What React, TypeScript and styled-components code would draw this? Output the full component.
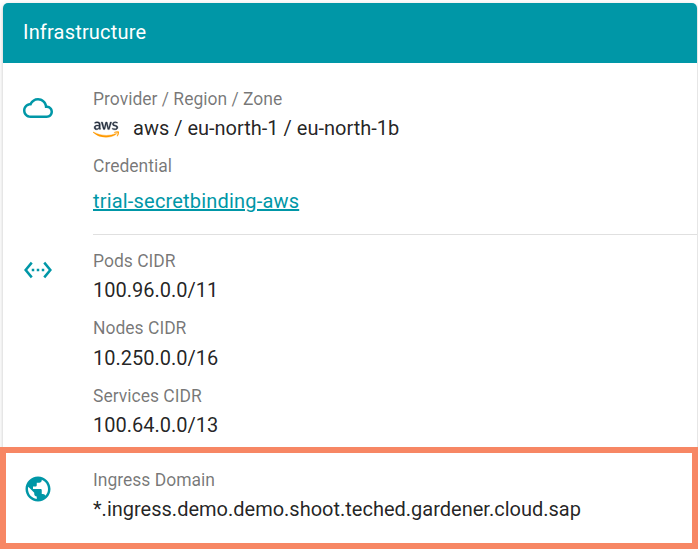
import React from "react";
import styled, { createGlobalStyle } from "styled-components";
import { FaAws } from "react-icons/fa";

const GlobalStyle = createGlobalStyle`
  * { box-sizing: border-box; }
  body {
    margin: 0;
    background: #fff;
    font-family: Roboto, "Liberation Sans", sans-serif;
    overflow: hidden;
  }
`;

const Page = styled.main`
  position: relative;
  width: 698px;
  height: 549px;
  overflow: hidden;
  padding: 3px 1px 0 3px;
`;

const Card = styled.section`
  height: 560px;
  border-radius: 5px;
  background: #fff;
  box-shadow: 0 3px 1px -2px rgba(0, 0, 0, 0.2), 0 2px 3px rgba(0, 0, 0, 0.14), 0 1px 6px rgba(0, 0, 0, 0.12);
`;

const Header = styled.header`
  display: flex;
  align-items: center;
  height: 60px;
  padding: 0 20px 2px;
  border-radius: 5px 5px 0 0;
  background: #0097a7;
  color: #fff;
  font-size: 20px;
  letter-spacing: 0.009375em;
`;

const Row = styled.div<{ $top: number; $height: number }>`
  display: flex;
  height: ${(p) => p.$height}px;
  padding: ${(p) => p.$top}px 0 0 20px;
`;

const IconCell = styled.div<{ $offset: number }>`
  flex: 0 0 70px;
  padding-top: ${(p) => p.$offset}px;
`;

const Icon = styled.svg`
  display: block;
  width: 30px;
  height: 30px;
  fill: #0097a7;
`;

const Fields = styled.div`
  flex: 1;
`;

const Field = styled.div<{ $height?: number }>`
  height: ${(p) => p.$height ?? 67.4}px;
`;

const Label = styled.div`
  font-size: 17.5px;
  line-height: 22px;
  color: rgba(0, 0, 0, 0.54);
`;

const Value = styled.div<{ $gap?: number }>`
  display: flex;
  align-items: center;
  margin-top: ${(p) => p.$gap ?? 6.2}px;
  font-size: 20px;
  line-height: 24px;
  color: rgba(0, 0, 0, 0.87);
`;

const Link = styled.a`
  color: #0097a7;
  letter-spacing: 0.009375em;
  text-decoration: underline;
  text-decoration-thickness: 2px;
`;

const VendorLogo = styled(FaAws)`
  width: 26px;
  height: 21px;
  margin: 2px 14px 0 0;

  path {
    fill: url(#vendor-colors);
    stroke: url(#vendor-colors);
    stroke-width: 8px;
  }
`;

const Divider = styled.hr`
  height: 1px;
  margin: 0 0 0 90px;
  border: 0;
  background: #e0e0e0;
`;

const Highlight = styled.div`
  position: absolute;
  inset: 447px 0 0 0;
  border: 6px solid #f78764;
`;

const CLOUD =
  "M19.35 10.04C18.67 6.59 15.64 4 12 4 9.11 4 6.6 5.64 5.35 8.04 2.34 8.36 0 10.91 0 14c0 3.31 2.69 6 6 6h13c2.76 0 5-2.24 5-5 0-2.64-2.05-4.78-4.65-4.96zM19 18H6c-2.21 0-4-1.79-4-4s1.79-4 4-4h.71C7.37 7.69 9.48 6 12 6c3.04 0 5.5 2.46 5.5 5.5v.5H19c1.66 0 3 1.34 3 3s-1.34 3-3 3z";
const NETWORK =
  "M7.77 6.76L6.23 5.48.82 12l5.41 6.52 1.54-1.28L3.42 12l4.35-5.24zM7 13h2v-2H7v2zm10-2h-2v2h2v-2zm-6 2h2v-2h-2v2zm6.77-7.52l-1.54 1.28L20.58 12l-4.35 5.24 1.54 1.28L23.18 12l-5.41-6.52z";
const GLOBE =
  "M12 2C6.48 2 2 6.48 2 12s4.48 10 10 10 10-4.48 10-10S17.52 2 12 2zm-1 17.93c-3.95-.49-7-3.85-7-7.93 0-.62.08-1.21.21-1.79L9 15v1c0 1.1.9 2 2 2v1.93zm6.9-2.54c-.26-.81-1-1.39-1.9-1.39h-1v-3c0-.55-.45-1-1-1H8v-2h2c.55 0 1-.45 1-1V7h2c1.1 0 2-.9 2-2v-.41c2.93 1.19 5 4.06 5 7.41 0 2.08-.8 3.97-2.1 5.39z";

const Glyph = ({ d }: { d: string }) => (
  <Icon viewBox="0 0 24 24" aria-hidden="true">
    <path d={d} />
  </Icon>
);

const Gradient = styled.svg`
  position: absolute;
  width: 0;
  height: 0;
`;

const networks = [
  ["Pods CIDR", "100.96.0.0/11"],
  ["Nodes CIDR", "10.250.0.0/16"],
  ["Services CIDR", "100.64.0.0/13"],
];

export default function App() {
  return (
    <Page>
      <GlobalStyle />
      <Gradient aria-hidden="true">
        <linearGradient id="vendor-colors" x1="0" y1="0" x2="0" y2="1">
          <stop offset="0.62" stopColor="#252f3e" />
          <stop offset="0.62" stopColor="#ff9900" />
        </linearGradient>
      </Gradient>
      <Card>
        <Header>Infrastructure</Header>
        <Row $top={25} $height={171}>
          <IconCell $offset={5}>
            <Glyph d={CLOUD} />
          </IconCell>
          <Fields>
            <Field $height={67}>
              <Label>Provider / Region / Zone</Label>
              <Value>
                <VendorLogo />
                aws / eu-north-1 / eu-north-1b
              </Value>
            </Field>
            <Field>
              <Label>Credential</Label>
              <Value $gap={12}>
                <Link>trial-secretbinding-aws</Link>
              </Value>
            </Field>
          </Fields>
        </Row>
        <Divider />
        <Row $top={15} $height={219}>
          <IconCell $offset={5}>
            <Glyph d={NETWORK} />
          </IconCell>
          <Fields>
            {networks.map(([label, value]) => (
              <Field key={label}>
                <Label>{label}</Label>
                <Value>{value}</Value>
              </Field>
            ))}
          </Fields>
        </Row>
        <Row $top={15} $height={90}>
          <IconCell $offset={5}>
            <Glyph d={GLOBE} />
          </IconCell>
          <Fields>
            <Label>Ingress Domain</Label>
            <Value>*.ingress.demo.demo.shoot.teched.gardener.cloud.sap</Value>
          </Fields>
        </Row>
      </Card>
      <Highlight />
    </Page>
  );
}
